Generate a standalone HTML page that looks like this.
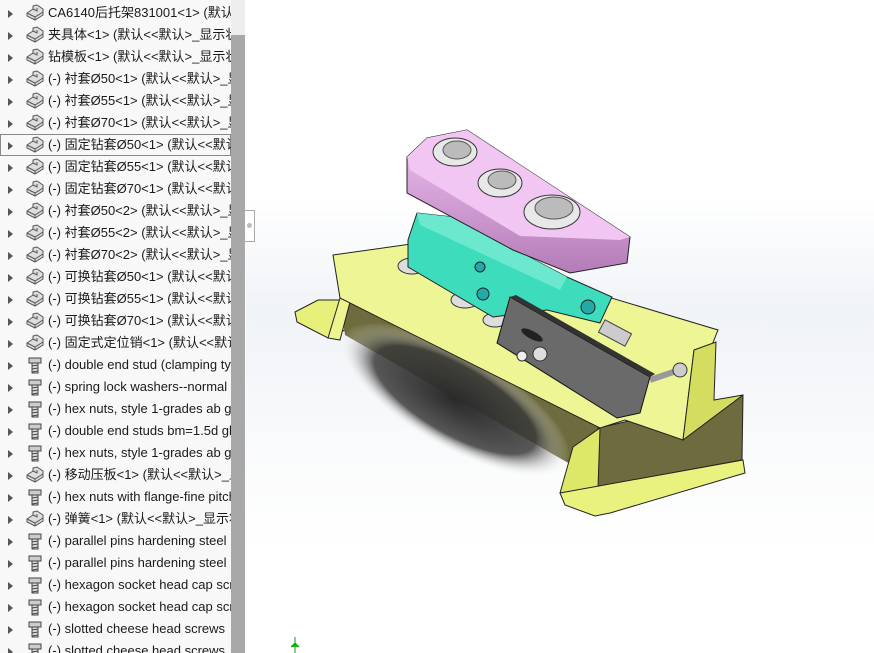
<!DOCTYPE html>
<html><head><meta charset="utf-8"><style>
body{margin:0;width:874px;height:653px;overflow:hidden;position:relative;background:#fff;font-family:"Liberation Sans","Noto Sans CJK SC",sans-serif}
#tree{position:absolute;left:0;top:0;width:231px;height:653px;background:#f8f8f8;overflow:hidden}
.r{position:absolute;left:0;height:22px;width:231px;white-space:nowrap;font-size:13px;color:#1a1a1a;line-height:22px}
.r .a{position:absolute;left:8px;top:8px;width:0;height:0;border-left:5px solid #555;border-top:4px solid transparent;border-bottom:4px solid transparent}
.r svg{position:absolute;left:25px;top:2px}
.r span{position:absolute;left:48px;top:0}
.sel{outline:1px solid #888;outline-offset:-1px}
#sb{position:absolute;left:231px;top:0;width:14px;height:653px;background:#eeeeee}
#th{position:absolute;left:231px;top:35px;width:14px;height:618px;background:#a8a8a8}
#vp{position:absolute;left:246px;top:0;width:628px;height:653px;background:linear-gradient(180deg,#fff 0%,#fff 30%,#f0f3f7 48%,#fafbfc 70%,#fff 85%)}
#split{position:absolute;left:245px;top:210px;width:9px;height:30px;border:1px solid #aaa;border-left:none;background:#fff}
#split:after{content:"";position:absolute;left:2px;top:12px;width:5px;height:5px;border-radius:50%;background:#bbb}
</style></head><body>
<div id="tree"></div>
<div id="sb"></div><div id="th"></div>
<div id="vp"></div>
<div id="split"></div>
<svg style="position:absolute;left:0;top:0" width="874" height="653">
<defs>
<radialGradient id="sh" cx="50%" cy="50%" r="50%"><stop offset="0" stop-color="#2a2a2a"/><stop offset="0.7" stop-color="#3a3a3a" stop-opacity=".85"/><stop offset="1" stop-color="#fff" stop-opacity="0"/></radialGradient>
<linearGradient id="pk" x1="0" y1="0" x2="0" y2="1"><stop offset="0" stop-color="#f0c0f0"/><stop offset="1" stop-color="#b47cb8"/></linearGradient>
</defs>
<!-- left foot -->
<polygon points="295,312 318,300 340,300 345,330 328,338 297,322" fill="#e6f07a" stroke="#222" stroke-width="1"/>
<!-- under-bridge olive -->
<polygon points="340,298 600,428 598,480 345,335" fill="#6e6c3e"/>
<ellipse cx="455" cy="400" rx="130" ry="48" fill="url(#sh)" transform="rotate(30 455 400)"/>
<!-- bridge front face -->
<polygon points="328,338 340,298 350,302 340,340" fill="#eef590" stroke="#222" stroke-width="1"/>
<!-- right block side -->
<polygon points="598,428 743,395 742,460 592,488" fill="#6e6c3e" stroke="#222" stroke-width="1"/>
<polygon points="600,428 598,488 560,493 573,447" fill="#dde868" stroke="#222" stroke-width="1"/>
<!-- feet -->
<polygon points="560,493 743,460 745,473 610,513 595,516 565,505" fill="#e9f27e" stroke="#222" stroke-width="1"/>
<!-- top face -->
<polygon points="333,255 425,242 718,330 712,345 694,350 683,440 625,420 600,428 340,298" fill="#edf595" stroke="#222" stroke-width="1"/>
<polygon points="694,350 716,342 714,400 743,395 683,440" fill="#d4dd60" stroke="#222" stroke-width="1"/>
<!-- white discs under cyan -->
<ellipse cx="412" cy="266" rx="14" ry="8" fill="#ddd" stroke="#333"/>
<ellipse cx="465" cy="300" rx="14" ry="8" fill="#ddd" stroke="#333"/>
<ellipse cx="495" cy="320" rx="12" ry="7" fill="#ddd" stroke="#333"/>
<!-- cyan block -->
<polygon points="408,240 417,213 453,217 567,277 612,297 600,323 547,310 493,317 408,267" fill="#3ddcbc" stroke="#222" stroke-width="1"/>
<polygon points="417,213 453,217 567,277 560,290 420,225" fill="#6ce8cf"/>
<circle cx="480" cy="267" r="5" fill="#2aa" stroke="#222"/>
<circle cx="483" cy="294" r="6" fill="#2aa" stroke="#222"/>
<circle cx="588" cy="307" r="7" fill="#2aa" stroke="#222"/>
<!-- pink block -->
<polygon points="407,157 427,138 467,130 630,237 627,263 570,273 513,250 407,193" fill="url(#pk)" stroke="#222" stroke-width="1"/>
<polygon points="407,157 427,138 467,130 630,237 620,240 520,236 410,170" fill="#f2c6f2"/>
<g fill="#e8e8e8" stroke="#333">
<ellipse cx="455" cy="152" rx="22" ry="14"/><ellipse cx="500" cy="183" rx="22" ry="14"/><ellipse cx="552" cy="212" rx="28" ry="17"/>
</g>
<g fill="#bbb" stroke="#555">
<ellipse cx="457" cy="150" rx="14" ry="9"/><ellipse cx="502" cy="180" rx="14" ry="9"/><ellipse cx="554" cy="208" rx="19" ry="11"/>
</g>
<!-- springs / bolt -->
<rect x="600" y="326" width="30" height="14" fill="#ccc" stroke="#444" transform="rotate(28 615 333)"/>
<line x1="650" y1="380" x2="685" y2="368" stroke="#999" stroke-width="6"/>
<circle cx="680" cy="370" r="7" fill="#ccc" stroke="#333"/>
<!-- dark bar -->
<polygon points="497,343 510,297 650,377 640,413 617,418" fill="#6a6a6a" stroke="#111" stroke-width="1"/>
<polygon points="510,297 516,295 655,374 650,377" fill="#333"/>
<ellipse cx="532" cy="335" rx="12" ry="4" fill="#222" transform="rotate(28 532 335)"/>
<circle cx="540" cy="354" r="7" fill="#ddd" stroke="#333"/>
<circle cx="522" cy="356" r="5" fill="#eee" stroke="#333"/>
<!-- axis -->
<path d="M295 637 L295 653 M291 647 L295 643 L299 647" stroke="#0a0" fill="#2b2" />
</svg>
<script>
var items=[
["p","CA6140后托架831001<1> (默认<<默认>_显示状态 1>)"],
["p","夹具体<1> (默认<<默认>_显示状态 1>)"],
["p","钻模板<1> (默认<<默认>_显示状态 1>)"],
["p","(-) 衬套Ø50<1> (默认<<默认>_显示状态 1>)"],
["p","(-) 衬套Ø55<1> (默认<<默认>_显示状态 1>)"],
["p","(-) 衬套Ø70<1> (默认<<默认>_显示状态 1>)"],
["p","(-) 固定钻套Ø50<1> (默认<<默认>_显示状态 1>)"],
["p","(-) 固定钻套Ø55<1> (默认<<默认>_显示状态 1>)"],
["p","(-) 固定钻套Ø70<1> (默认<<默认>_显示状态 1>)"],
["p","(-) 衬套Ø50<2> (默认<<默认>_显示状态 1>)"],
["p","(-) 衬套Ø55<2> (默认<<默认>_显示状态 1>)"],
["p","(-) 衬套Ø70<2> (默认<<默认>_显示状态 1>)"],
["p","(-) 可换钻套Ø50<1> (默认<<默认>_显示状态 1>)"],
["p","(-) 可换钻套Ø55<1> (默认<<默认>_显示状态 1>)"],
["p","(-) 可换钻套Ø70<1> (默认<<默认>_显示状态 1>)"],
["p","(-) 固定式定位销<1> (默认<<默认>_显示状态 1>)"],
["b","(-) double end stud (clamping type)"],
["b","(-) spring lock washers--normal type"],
["b","(-) hex nuts, style 1-grades ab gb"],
["b","(-) double end studs bm=1.5d gb"],
["b","(-) hex nuts, style 1-grades ab gb"],
["p","(-) 移动压板<1> (默认<<默认>_显示状态 1>)"],
["b","(-) hex nuts with flange-fine pitch"],
["p","(-) 弹簧<1> (默认<<默认>_显示状态 1>)"],
["b","(-) parallel pins hardening steel"],
["b","(-) parallel pins hardening steel"],
["b","(-) hexagon socket head cap screws"],
["b","(-) hexagon socket head cap screws"],
["b","(-) slotted cheese head screws"],
["b","(-) slotted cheese head screws"]];
var part='<svg width="20" height="18" viewBox="0 0 20 18"><path d="M2 9 L8 5 L8 2 L12 1 L18 5 L18 11 L10 16 L2 12 Z" fill="#ddd" stroke="#555"/><path d="M2 9 L10 13 L18 8 M10 13 L10 16 M8 5 L12 7 L12 4" fill="none" stroke="#555"/></svg>';
var bolt='<svg width="20" height="18" viewBox="0 0 20 18"><path d="M4 2 L16 2 L16 7 L4 7 Z" fill="#ccc" stroke="#444"/><path d="M7 7 L13 7 L13 17 L7 17 Z" fill="#ddd" stroke="#444"/><path d="M7 10 L13 9 M7 13 L13 12 M7 16 L13 15" stroke="#444"/></svg>';
var h='';
items.forEach(function(it,i){h+='<div class="r'+(i==6?' sel':'')+'" style="top:'+(2+i*22)+'px"><i class="a"></i>'+(it[0]=='p'?part:bolt)+'<span>'+it[1]+'</span></div>';});
document.getElementById('tree').innerHTML=h;
</script>
</body></html>
